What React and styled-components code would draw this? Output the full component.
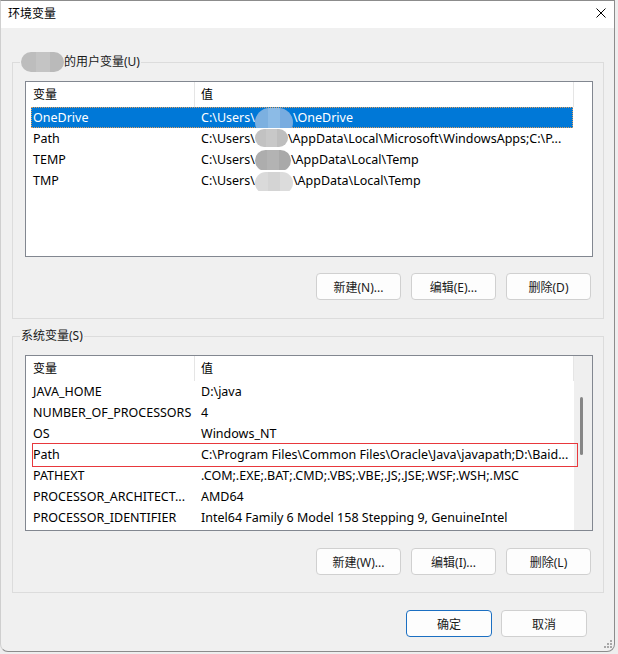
import React from 'react';
import styled, { createGlobalStyle } from 'styled-components';

const GlobalStyle = createGlobalStyle`
  html, body {
    margin: 0;
    background: #eeeeee;
  }
  body {
    font-family: "Noto Sans", "Noto Sans CJK SC", sans-serif;
    font-size: 12px;
    color: #000;
  }
`

const Window = styled.div`
  position: relative;
  width: 615px;
  height: 652px;
  box-sizing: border-box;
  border: 1px solid #8c8c8c;
  border-left-color: #cfcfcf;
  border-radius: 0 0 8px 8px;
  background: #f0f0f0;
  overflow: hidden;
  display: flex;
  flex-direction: column;
`

const TitleBar = styled.div`
  height: 27px;
  flex: none;
  background: #fff;
  display: flex;
  justify-content: space-between;
  align-items: flex-start;
  padding: 4px 8px 0 7px;
  box-sizing: border-box;
  line-height: 17px;
`

const CloseIcon = styled.svg`
  width: 10px;
  height: 10px;
  margin-top: 3px;
`

const Body = styled.div`
  flex: 1;
  display: flex;
  flex-direction: column;
  padding: 0 10px 0 11px;
`

const Group = styled.fieldset`
  margin: ${p => p.$top}px 0 0;
  border: 1px solid #dcdcdc;
  padding: 11px 10px ${p => p.$bottom}px 12px;
  min-width: 0;
`

const Legend = styled.legend`
  padding: 0 1px;
  margin-left: -5px;
  line-height: 16px;
  color: #1a1a1a;
`

const ListBox = styled.div`
  height: 176px;
  box-sizing: border-box;
  border: 1px solid #828790;
  background: #fff;
  display: flex;
  overflow: hidden;
`

const ListMain = styled.div`
  width: 548px;
  flex: none;
  position: relative;
`

const Header = styled.div`
  display: grid;
  grid-template-columns: 169px 1fr;
  height: 25px;
  line-height: 25px;
  border-right: 1px solid #e5e5e5;
  box-sizing: border-box;
`

const HeadCell = styled.div`
  padding-left: ${p => p.$pad}px;
  border-right: ${p => (p.$divider ? '1px solid #e5e5e5' : 'none')};
`

const Row = styled.div`
  position: relative;
  display: grid;
  grid-template-columns: 163px 1fr;
  margin-left: 5px;
  width: 542px;
  height: 21px;
  line-height: 22px;
  font-size: 12.5px;
  white-space: nowrap;
  background: ${p => (p.$selected ? '#0078d7' : 'transparent')};
  color: ${p => (p.$selected ? '#fff' : '#000')};
  outline: ${p => (p.$selected ? '1px dotted #e0a060' : 'none')};
  outline-offset: -1px;

  ${p => p.$marked && `
    &::after {
      content: "";
      position: absolute;
      left: 1px;
      top: -1px;
      width: 546px;
      height: 24px;
      box-sizing: border-box;
      border: 1px solid #e8383d;
    }
  `}
`

const Cell = styled.div`
  padding-left: ${p => p.$pad}px;
  overflow: hidden;
`

const Redact = styled.span`
  display: inline-block;
  vertical-align: middle;
  position: relative;
  top: ${p => p.$dy || 0}px;
  width: ${p => p.$w}px;
  height: ${p => p.$h}px;
  margin: ${p => -(p.$h - 14) / 2}px 0;
  border-radius: ${p => p.$h / 2}px;
  background: linear-gradient(90deg, ${p => p.$c[0]} 0 34%, ${p => p.$c[1]} 34% 67%, ${p => p.$c[2]} 67%);
`

const ScrollBar = styled.div`
  width: 18px;
  flex: none;
  background: #efefef;
  display: flex;
  justify-content: center;
`

const Thumb = styled.div`
  width: 3px;
  height: 58px;
  margin-top: 41px;
  margin-left: -4px;
  border-radius: 2px;
  background: #868686;
`

const ButtonRow = styled.div`
  display: flex;
  justify-content: flex-end;
  gap: ${p => p.$gap || 10}px;
  margin-top: ${p => p.$top}px;
  padding-right: ${p => p.$right}px;
`

const Button = styled.button`
  width: ${p => p.$w || 85}px;
  height: 27px;
  box-sizing: border-box;
  padding: 0;
  border: 1px solid ${p => (p.$primary ? '#1b6fc2' : '#d0d0d0')};
  border-radius: 4px;
  background: #fdfdfd;
  font: inherit;
  color: #1a1a1a;
`

const Grip = styled.svg`
  position: absolute;
  right: 1px;
  bottom: 1px;
  width: 11px;
  height: 11px;
`

const userVars = [
  { name: 'OneDrive', pre: 'C:\\Users\\', post: '\\OneDrive', blob: { w: 38, h: 29, dy: 4, c: ['#7cb0e0', '#8cbbe6', '#78ace0'] }, selected: true },
  { name: 'Path', pre: 'C:\\Users\\', post: '\\AppData\\Local\\Microsoft\\WindowsApps;C:\\P...', blob: { w: 33, h: 18, dy: -2, c: ['#c2c2c2', '#c8c8c8', '#bebebe'] } },
  { name: 'TEMP', pre: 'C:\\Users\\', post: '\\AppData\\Local\\Temp', blob: { w: 36, h: 21, c: ['#adadad', '#b3b3b3', '#a9a9a9'] } },
  { name: 'TMP', pre: 'C:\\Users\\', post: '\\AppData\\Local\\Temp', blob: { w: 38, h: 22, dy: 1, c: ['#dadada', '#d4d4d4', '#dcdcdc'] } },
];

const sysVars = [
  { name: 'JAVA_HOME', value: 'D:\\java' },
  { name: 'NUMBER_OF_PROCESSORS', value: '4' },
  { name: 'OS', value: 'Windows_NT' },
  { name: 'Path', value: 'C:\\Program Files\\Common Files\\Oracle\\Java\\javapath;D:\\Baid...', marked: true },
  { name: 'PATHEXT', value: '.COM;.EXE;.BAT;.CMD;.VBS;.VBE;.JS;.JSE;.WSF;.WSH;.MSC' },
  { name: 'PROCESSOR_ARCHITECT...', value: 'AMD64' },
  { name: 'PROCESSOR_IDENTIFIER', value: 'Intel64 Family 6 Model 158 Stepping 9, GenuineIntel' },
];

const ListHeader = () => (
  <Header>
    <HeadCell $pad={7} $divider>变量</HeadCell>
    <HeadCell $pad={6}>值</HeadCell>
  </Header>
);

export default function App() {
  return (
    <>
      <GlobalStyle />
      <Window>
        <TitleBar>
          <span>环境变量</span>
          <CloseIcon viewBox="0 0 10 10">
            <path d="M0.5 0.5 L9.5 9.5 M9.5 0.5 L0.5 9.5" stroke="#000" strokeWidth="1" fill="none" />
          </CloseIcon>
        </TitleBar>

        <Body>
          <Group $top={26} $bottom={18}>
            <Legend>
              <Redact $w={43} $h={20} $dy={-1} $c={['#bdbdbd', '#c4c4c4', '#bababa']} />
              的用户变量(U)
            </Legend>
            <ListBox>
              <ListMain>
                <ListHeader />
                {userVars.map(v => (
                  <Row key={v.name} $selected={v.selected}>
                    <Cell $pad={2}>{v.name}</Cell>
                    <Cell $pad={7}>
                      {v.pre}
                      <Redact $w={v.blob.w} $h={v.blob.h} $dy={v.blob.dy} $c={v.blob.c} />
                      {v.post}
                    </Cell>
                  </Row>
                ))}
              </ListMain>
            </ListBox>
            <ButtonRow $top={16} $right={2}>
              <Button>新建(N)...</Button>
              <Button>编辑(E)...</Button>
              <Button>删除(D)</Button>
            </ButtonRow>
          </Group>

          <Group $top={9} $bottom={17}>
            <Legend>系统变量(S)</Legend>
            <ListBox>
              <ListMain>
                <ListHeader />
                {sysVars.map(v => (
                  <Row key={v.name} $marked={v.marked}>
                    <Cell $pad={2}>{v.name}</Cell>
                    <Cell $pad={7}>{v.value}</Cell>
                  </Row>
                ))}
              </ListMain>
              <ScrollBar>
                <Thumb />
              </ScrollBar>
            </ListBox>
            <ButtonRow $top={17} $right={2}>
              <Button>新建(W)...</Button>
              <Button>编辑(I)...</Button>
              <Button>删除(L)</Button>
            </ButtonRow>
          </Group>

          <ButtonRow $top={17} $right={17} $gap={9}>
            <Button $w={86} $primary>确定</Button>
            <Button $w={86}>取消</Button>
          </ButtonRow>
        </Body>

        <Grip viewBox="0 0 11 11">
          <g fill="#a8a8a8">
            <rect x="8" y="1" width="2" height="2" />
            <rect x="5" y="4" width="2" height="2" />
            <rect x="8" y="4" width="2" height="2" />
            <rect x="2" y="7" width="2" height="2" />
            <rect x="5" y="7" width="2" height="2" />
            <rect x="8" y="7" width="2" height="2" />
          </g>
        </Grip>
      </Window>
    </>
  );
}
